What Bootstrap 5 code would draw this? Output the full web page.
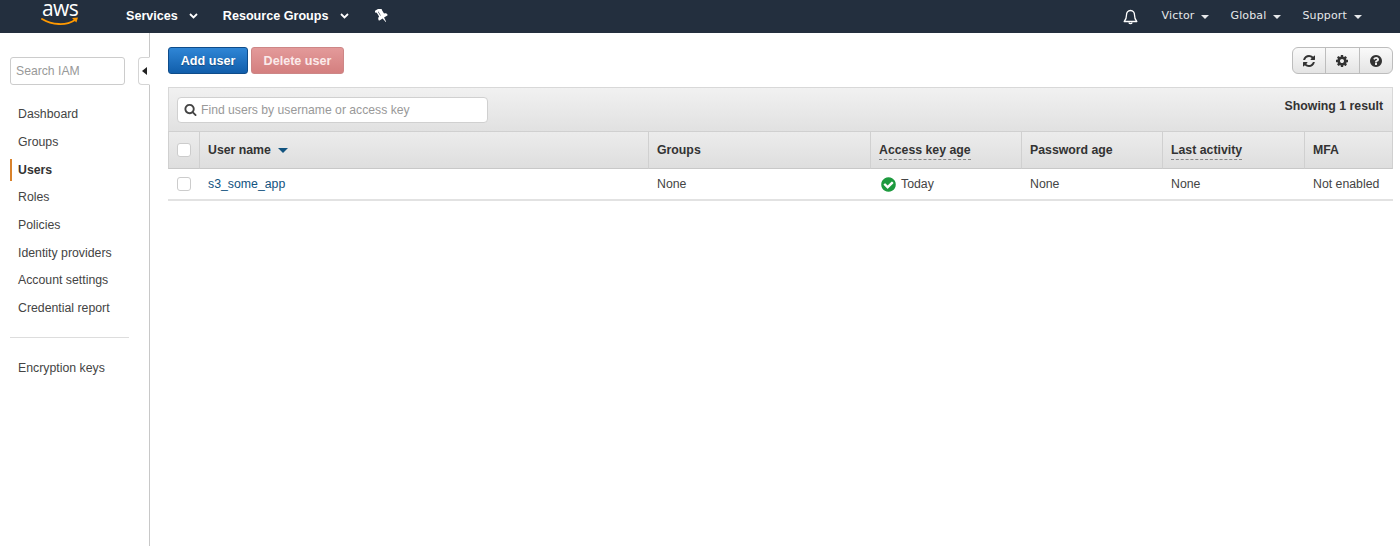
<!DOCTYPE html>
<html lang="en">
<head>
<meta charset="utf-8">
<title>IAM Users</title>
<link href="https://cdn.jsdelivr.net/npm/bootstrap@5.3.0/dist/css/bootstrap.min.css" rel="stylesheet">
<style>
html,body{height:546px;overflow:hidden}
body{font-family:"Liberation Sans",Arial,sans-serif;font-size:12.3px;color:#333;background:#fff}
.topbar{height:33px;background:#232f3e;padding:0;flex-wrap:nowrap;color:#fff}
.aws-logo{width:38px;margin-left:41px;margin-right:47px;height:33px;position:relative;display:block;text-decoration:none}
.aws-word{font-family:"Open Sans","Liberation Sans",sans-serif;font-size:21px;line-height:16px;color:#fff;display:block;text-align:center;letter-spacing:-.6px}
.aws-logo svg{position:absolute;left:0;top:17px}
.main-link{color:#fff;font-weight:700;font-size:12.6px;text-decoration:none;display:flex;align-items:center;white-space:nowrap}
.main-link svg{margin-left:11px}
.link-services{margin-right:25px}
.link-groups{margin-right:26px}
.right-link{color:#e6e8ea;font-family:"DejaVu Sans",sans-serif;font-size:11px;text-decoration:none;display:flex;align-items:center;letter-spacing:.15px}
.right-link svg{margin-left:7px}
.right-set{margin-left:auto;margin-right:38px;gap:21px}
.bell-link{margin-right:3px}
.shell{height:513px}
.side-panel{width:150px;flex:none;border-right:1px solid #c8c8c8;position:relative;padding:24px 0 0 10px}
.iam-search{width:115px;height:28px;border:1px solid #ccc;border-radius:3px;font-size:12.2px;padding:0 5px;color:#333;box-shadow:none}
.iam-search::placeholder{color:#999}
.side-toggle{position:absolute;right:-1px;top:24px;width:12px;height:28px;border:1px solid #d5d5d5;border-right:1px solid #fff;border-radius:4px 0 0 4px;background:#fff;display:flex;align-items:center;justify-content:center}
.side-menu{margin-top:16px}
.side-menu .nav-link{color:#444;font-size:12.3px;line-height:15px;padding:6.35px 0 6.35px 6px;border-left:2px solid transparent;height:27.7px}
.side-menu .nav-link.on{font-weight:700;color:#333;border-left:2px solid #d9822b;height:22px;padding-top:3.5px;padding-bottom:3.5px;margin:3px 0 2.7px}
.side-rule{margin:14px 20px 17px 0;border:0;border-top:1px solid #ddd;opacity:1}
.work{flex:1;min-width:0;padding:14px 7px 0 18px}
.action-row{height:27px;margin-bottom:13px}
.act-btn{height:27px;padding:1px 0 0;font-size:12.6px;font-weight:700;line-height:25px;border-radius:3px;white-space:nowrap}
.act-add{background:linear-gradient(#2f86d6,#115eab);border:1px solid #0e4c8a;color:#fff;width:80px;text-shadow:0 1px 1px rgba(0,0,0,.3)}
.btn.act-del:disabled{background:linear-gradient(#e39a9a,#d47f7f);border:1px solid #cd8686;color:#fbeaea;width:93px;margin-left:3px;opacity:1}
.tool-group .btn{width:34.4px;height:27px;padding:0;background:linear-gradient(#fafafa,#e4e4e4);border:1px solid #bdbdbd;display:flex;align-items:center;justify-content:center}
.filter-bar{height:44px;background:linear-gradient(#f1f1f1,#e1e1e1);border:1px solid #d8d8d8;border-bottom:0;padding:0 9px 0 8px}
.filter-box{width:311px;height:26px;background:#fff;border:1px solid #d0d0d0;border-radius:4px;padding-left:6px;gap:4px}
.filter-box input{border:0;outline:0;padding:0;font-size:12.2px;flex:1;background:transparent;min-width:0;height:24px}
.filter-box input::placeholder{color:#999}
.result-count{font-weight:700;font-size:12.3px;color:#333;margin-bottom:6px}
.user-table{table-layout:fixed;width:1225px;margin:0;border-collapse:separate;border-spacing:0;font-size:12.3px;--bs-table-bg:transparent}
.user-table th{height:38px;padding:0 8px;background:linear-gradient(#ececec,#dedede);border:0;border-top:1px solid #d0d0d0;border-bottom:1px solid #c8c8c8;border-left:1px solid #d0d0d0;font-weight:700;color:#333;vertical-align:middle;white-space:nowrap}
.user-table th:last-child{border-right:1px solid #d0d0d0}
.user-table td{height:32px;padding:0 0 0 9px;border:0;border-bottom:2px solid #e2e2e2;color:#444;vertical-align:middle;white-space:nowrap}
.user-table .check-cell{padding:0}
.dash-title{border-bottom:1px dashed #888;padding-bottom:2px}
.row-check{width:14px;height:14px;border:1px solid #ccc;border-radius:3px;background:#fff;display:block;margin:0 auto}
.user-link{color:#11537f;text-decoration:none}
.key-age{display:flex;align-items:center;gap:4px}
.key-age svg{margin-left:1px}
</style>
</head>
<body>
<nav class="navbar topbar d-flex align-items-center">
  <a class="aws-logo" href="#"><span class="aws-word">aws</span>
    <svg width="38" height="9" viewBox="0 0 38 9"><path d="M1 2c10 6 24 7 33 1" fill="none" stroke="#f90" stroke-width="1.8" stroke-linecap="round"/><path d="M31 1l6-.5-1.600 5z" fill="#f90"/></svg>
  </a>
  <a class="main-link link-services" href="#">Services<svg width="9" height="6" viewBox="0 0 9 6"><path d="M1 1l3.500 3.500L8 1" fill="none" stroke="#fff" stroke-width="1.800"/></svg></a>
  <a class="main-link link-groups" href="#">Resource Groups<svg width="9" height="6" viewBox="0 0 9 6"><path d="M1 1l3.500 3.500L8 1" fill="none" stroke="#fff" stroke-width="1.800"/></svg></a>
  <a href="#" class="d-flex" aria-label="Pin"><svg width="15" height="15" viewBox="-250 100 1652 1600"><path transform="rotate(-32 576 896)" fill="#fff" d="M480 672v-448q0-14-9-23t-23-9-23 9-9 23v448q0 14 9 23t23 9 23-9 9-23zm672 352q0 26-19 45t-45 19h-429l-51 483q-2 12-10.500 20.500t-20.500 8.500h-1q-27 0-32-27l-76-485h-404q-26 0-45-19t-19-45q0-123 78.500-221.500t177.500-98.500v-512q-52 0-90-38t-38-90 38-90 90-38h640q52 0 90 38t38 90-38 90-90 38v512q99 0 177.500 98.500t78.500 221.500z"/></svg></a>
  <div class="d-flex align-items-center right-set">
    <a href="#" class="right-link bell-link" aria-label="Notifications"><svg style="margin:0" width="15" height="16" viewBox="0 0 15 16"><path d="M7.500 1.500c-2.800 0-4 2.200-4 4.500 0 3.200-.8 5-2.300 6.500h12.600C12.300 11 11.500 9.200 11.500 6c0-2.300-1.200-4.500-4-4.500z" fill="none" stroke="#fff" stroke-width="1.300" stroke-linejoin="round"/><path d="M5.800 13.500a1.800 1.800 0 0 0 3.400 0" fill="none" stroke="#fff" stroke-width="1.200"/></svg></a>
    <a href="#" class="right-link">Victor<svg width="8" height="4" viewBox="0 0 8 4"><path d="M0 0h8L4 4z" fill="#e6e8ea"/></svg></a>
    <a href="#" class="right-link">Global<svg width="8" height="4" viewBox="0 0 8 4"><path d="M0 0h8L4 4z" fill="#e6e8ea"/></svg></a>
    <a href="#" class="right-link">Support<svg width="8" height="4" viewBox="0 0 8 4"><path d="M0 0h8L4 4z" fill="#e6e8ea"/></svg></a>
  </div>
</nav>
<div class="d-flex shell">
  <aside class="side-panel">
    <input class="form-control iam-search" placeholder="Search IAM" aria-label="Search IAM">
    <div class="side-toggle"><svg width="5" height="8" viewBox="0 0 5 8"><path d="M5 0v8L0 4z" fill="#222"/></svg></div>
    <nav class="nav flex-column side-menu">
      <a class="nav-link" href="#">Dashboard</a>
      <a class="nav-link" href="#">Groups</a>
      <a class="nav-link on" href="#">Users</a>
      <a class="nav-link" href="#">Roles</a>
      <a class="nav-link" href="#">Policies</a>
      <a class="nav-link" href="#">Identity providers</a>
      <a class="nav-link" href="#">Account settings</a>
      <a class="nav-link" href="#">Credential report</a>
      <hr class="side-rule">
      <a class="nav-link" href="#">Encryption keys</a>
    </nav>
  </aside>
  <main class="work">
    <div class="d-flex align-items-center action-row">
      <button class="btn act-btn act-add" type="button">Add user</button>
      <button class="btn act-btn act-del" type="button" disabled>Delete user</button>
      <div class="btn-group tool-group ms-auto">
        <button class="btn" type="button" aria-label="Refresh"><svg width="14" height="14" viewBox="0 0 1792 1792"><path fill="#333" d="M1639 1056q0 5-1 7-64 268-268 434.500t-478 166.500q-146 0-282.500-55t-243.500-157l-129 129q-19 19-45 19t-45-19-19-45v-448q0-26 19-45t45-19h448q26 0 45 19t19 45-19 45l-137 137q71 66 161 102t187 36q134 0 250-65t186-179q11-17 53-117 8-23 30-23h192q13 0 22.500 9.500t9.500 22.500zm25-800v448q0 26-19 45t-45 19h-448q-26 0-45-19t-19-45 19-45l138-138q-148-137-349-137-134 0-250 65t-186 179q-11 17-53 117-8 23-30 23h-199q-13 0-22.500-9.500t-9.500-22.500v-7q65-268 270-434.500t480-166.500q146 0 284 55.500t245 156.500l130-129q19-19 45-19t45 19 19 45z"/></svg></button>
        <button class="btn" type="button" aria-label="Settings"><svg width="14" height="14" viewBox="0 0 1792 1792"><path fill="#333" d="M1152 896q0-106-75-181t-181-75-181 75-75 181 75 181 181 75 181-75 75-181zm512-109v222q0 12-8 23t-20 13l-185 28q-19 54-39 91 35 50 107 138 10 12 10 25t-9 23q-27 37-99 108t-94 71q-12 0-26-9l-138-108q-44 23-91 38-16 136-29 186-7 28-36 28h-222q-14 0-24.500-8.500t-11.500-21.500l-28-184q-49-16-90-37l-141 107q-10 9-25 9-14 0-25-11-126-114-165-168-7-10-7-23 0-12 8-23 15-21 51-66.500t54-70.500q-27-50-41-99l-183-27q-13-2-21-12.500t-8-23.500v-222q0-12 8-23t19-13l186-28q14-46 39-92-40-57-107-138-10-12-10-24 0-10 9-23 26-36 98.500-107.500t94.500-71.500q13 0 26 10l138 107q44-23 91-38 16-136 29-186 7-28 36-28h222q14 0 24.500 8.500t11.500 21.500l28 184q49 16 90 37l142-107q9-9 24-9 13 0 25 10 129 119 165 170 7 8 7 22 0 12-8 23-15 21-51 66.500t-54 70.500q26 50 41 98l183 28q13 2 21 12.500t8 23.500z"/></svg></button>
        <button class="btn" type="button" aria-label="Help"><svg width="14" height="14" viewBox="0 0 1792 1792"><path fill="#333" d="M1024 1376v-192q0-14-9-23t-23-9h-192q-14 0-23 9t-9 23v192q0 14 9 23t23 9h192q14 0 23-9t9-23zm256-672q0-88-55.500-163t-138.500-116-170-41q-243 0-371 213-15 24 8 42l132 100q7 6 19 6 16 0 25-12 53-68 86-92 34-24 86-24 48 0 85.500 26t37.500 59q0 38-20 61t-68 45q-63 28-115.500 86.500t-52.500 125.500v36q0 14 9 23t23 9h192q14 0 23-9t9-23q0-19 21.500-49.500t54.500-49.500q32-18 49-28.500t46-35 44.500-48 28-60.500 12.500-81zm384 192q0 209-103 385.500t-279.500 279.500-385.500 103-385.500-103-279.500-279.500-103-385.500 103-385.500 279.500-279.500 385.500-103 385.500 103 279.500 279.500 103 385.500z"/></svg></button>
      </div>
    </div>
    <div class="d-flex align-items-center justify-content-between filter-bar">
      <div class="d-flex align-items-center filter-box">
        <svg width="13" height="13" viewBox="0 0 1792 1792"><path fill="#444" d="M1216 832q0-185-131.500-316.500t-316.500-131.500-316.500 131.500-131.500 316.500 131.500 316.500 316.500 131.500 316.500-131.500 131.500-316.500zm512 832q0 52-38 90t-90 38q-54 0-90-38l-343-342q-179 124-399 124-143 0-273.500-55.500t-225-150-150-225-55.500-273.500 55.500-273.500 150-225 225-150 273.500-55.500 273.500 55.500 225 150 150 225 55.500 273.500q0 220-124 399l343 343q37 37 37 90z"/></svg>
        <input placeholder="Find users by username or access key" aria-label="Find users">
      </div>
      <div class="result-count">Showing 1 result</div>
    </div>
    <table class="table user-table">
      <colgroup><col style="width:31px"><col style="width:449px"><col style="width:222px"><col style="width:151px"><col style="width:141px"><col style="width:142px"><col style="width:89px"></colgroup>
      <thead>
        <tr>
          <th class="check-cell"><span class="row-check"></span></th>
          <th>User name <svg class="ms-1" width="10" height="5" viewBox="0 0 10 5"><path d="M0 0h10L5 5z" fill="#11537f"/></svg></th>
          <th>Groups</th>
          <th><span class="dash-title">Access key age</span></th>
          <th>Password age</th>
          <th><span class="dash-title">Last activity</span></th>
          <th>MFA</th>
        </tr>
      </thead>
      <tbody>
        <tr>
          <td class="check-cell"><span class="row-check"></span></td>
          <td><a class="user-link" href="#">s3_some_app</a></td>
          <td>None</td>
          <td><div class="key-age"><svg width="17" height="17" viewBox="0 0 1792 1792"><path fill="#1d9a3e" d="M1412 734q0-28-18-46l-91-90q-19-19-45-19t-45 19l-408 407-226-226q-19-19-45-19t-45 19l-91 90q-18 18-18 46 0 27 18 45l362 362q19 19 45 19 27 0 46-19l543-543q18-18 18-45zm252 162q0 209-103 385.500t-279.500 279.500-385.500 103-385.500-103-279.500-279.500-103-385.500 103-385.500 279.500-279.500 385.500-103 385.500 103 279.500 279.500 103 385.500z"/></svg>Today</div></td>
          <td>None</td>
          <td>None</td>
          <td>Not enabled</td>
        </tr>
      </tbody>
    </table>
  </main>
</div>
<script src="https://cdn.jsdelivr.net/npm/bootstrap@5.3.0/dist/js/bootstrap.bundle.min.js"></script>
</body>
</html>
